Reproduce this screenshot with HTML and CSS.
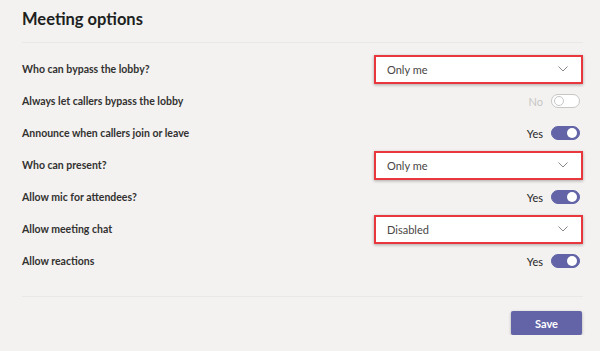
FILE: index.html
```html
<!DOCTYPE html>
<html lang="en">
  <head>
    <meta charset="UTF-8" />
    <meta name="viewport" content="width=device-width, initial-scale=1.0" />
    <title>Meeting options</title>
    <link rel="stylesheet" href="styles.css">
  </head>
  <body>
    <div class="panel">
      <h1 class="panel-title">Meeting options</h1>

      <div class="options">
        <!-- Lobby -->
        <div class="option-row">
          <span class="option-label">Who can bypass the lobby?</span>
          <div class="dropdown">
            <span>Only me</span>
            <svg class="chevron" width="10" height="6" viewBox="0 0 10 6"><path d="M0.5 0.5 L5 5 L9.5 0.5" fill="none" stroke="#8a8886" stroke-width="1"/></svg>
          </div>
        </div>
        <div class="option-row">
          <span class="option-label">Always let callers bypass the lobby</span>
          <div class="toggle-wrap">
            <span class="toggle-text off">No</span>
            <span class="toggle"></span>
          </div>
        </div>
        <div class="option-row">
          <span class="option-label">Announce when callers join or leave</span>
          <div class="toggle-wrap">
            <span class="toggle-text">Yes</span>
            <span class="toggle on"></span>
          </div>
        </div>

        <!-- Presenting -->
        <div class="option-row">
          <span class="option-label">Who can present?</span>
          <div class="dropdown">
            <span>Only me</span>
            <svg class="chevron" width="10" height="6" viewBox="0 0 10 6"><path d="M0.5 0.5 L5 5 L9.5 0.5" fill="none" stroke="#8a8886" stroke-width="1"/></svg>
          </div>
        </div>
        <div class="option-row">
          <span class="option-label">Allow mic for attendees?</span>
          <div class="toggle-wrap">
            <span class="toggle-text">Yes</span>
            <span class="toggle on"></span>
          </div>
        </div>

        <!-- Chat -->
        <div class="option-row">
          <span class="option-label">Allow meeting chat</span>
          <div class="dropdown">
            <span>Disabled</span>
            <svg class="chevron" width="10" height="6" viewBox="0 0 10 6"><path d="M0.5 0.5 L5 5 L9.5 0.5" fill="none" stroke="#8a8886" stroke-width="1"/></svg>
          </div>
        </div>
        <div class="option-row">
          <span class="option-label">Allow reactions</span>
          <div class="toggle-wrap">
            <span class="toggle-text">Yes</span>
            <span class="toggle on"></span>
          </div>
        </div>
      </div>

      <div class="panel-footer">
        <button class="save-btn">Save</button>
      </div>
    </div>
  </body>
</html>
```

FILE: styles.css
```css
/* Page */
body {
  margin: 0;
  background: #f3f2f1;
  font-family: Lato, "Open Sans", sans-serif;
  color: #252423;
}

.panel {
  padding: 0 17px 0 22px;
}

.panel-title {
  margin: 0;
  height: 42px;
  line-height: 38px;
  font-size: 16.5px;
  font-weight: 700;
  color: #201f1e;
  border-bottom: 1px solid #e9e8e7;
}

/* Option rows */
.options {
  padding-top: 10px;
}

.option-row {
  display: flex;
  align-items: center;
  justify-content: space-between;
  height: 32px;
}

.option-label {
  font-size: 10.5px;
  font-weight: 700;
  color: #323130;
}

/* Dropdown (red outline = highlight) */
.dropdown {
  box-sizing: border-box;
  width: 209px;
  height: 29px;
  display: flex;
  align-items: center;
  justify-content: space-between;
  padding: 0 13px 0 11px;
  background: #fff;
  border: 2px solid #e8383d;
  box-shadow: 0 1px 3px rgba(0, 0, 0, 0.3);
  font-size: 11px;
  color: #484644;
}

.chevron {
  display: block;
}

/* Toggles */
.toggle-wrap {
  display: flex;
  align-items: center;
  gap: 8px;
  margin-right: 3px;
}

.toggle-text {
  font-size: 11px;
  color: #252423;
}

.toggle-text.off {
  color: #c8c6c4;
}

.toggle {
  position: relative;
  box-sizing: border-box;
  width: 29px;
  height: 14px;
  border-radius: 7px;
  border: 1px solid #c8c6c4;
  background: #fff;
}

.toggle::after {
  content: "";
  position: absolute;
  top: 1px;
  left: 2px;
  box-sizing: border-box;
  width: 10px;
  height: 10px;
  border-radius: 50%;
  border: 1px solid #c8c6c4;
  background: #fff;
}

.toggle.on {
  background: #6264a7;
  border-color: #6264a7;
}

.toggle.on::after {
  left: auto;
  right: 2px;
  border: none;
  background: #fff;
}

/* Footer */
.panel-footer {
  margin-top: 19px;
  border-top: 1px solid #e9e8e7;
  padding-top: 14px;
  display: flex;
  justify-content: flex-end;
}

.save-btn {
  width: 71px;
  height: 24px;
  margin-right: 1px;
  border: none;
  border-radius: 2px;
  background: #6264a7;
  color: #fff;
  font-family: Lato, "Open Sans", sans-serif;
  font-size: 11px;
  font-weight: 700;
  box-shadow: 0 1px 3px rgba(0, 0, 0, 0.3);
  cursor: pointer;
}
```
